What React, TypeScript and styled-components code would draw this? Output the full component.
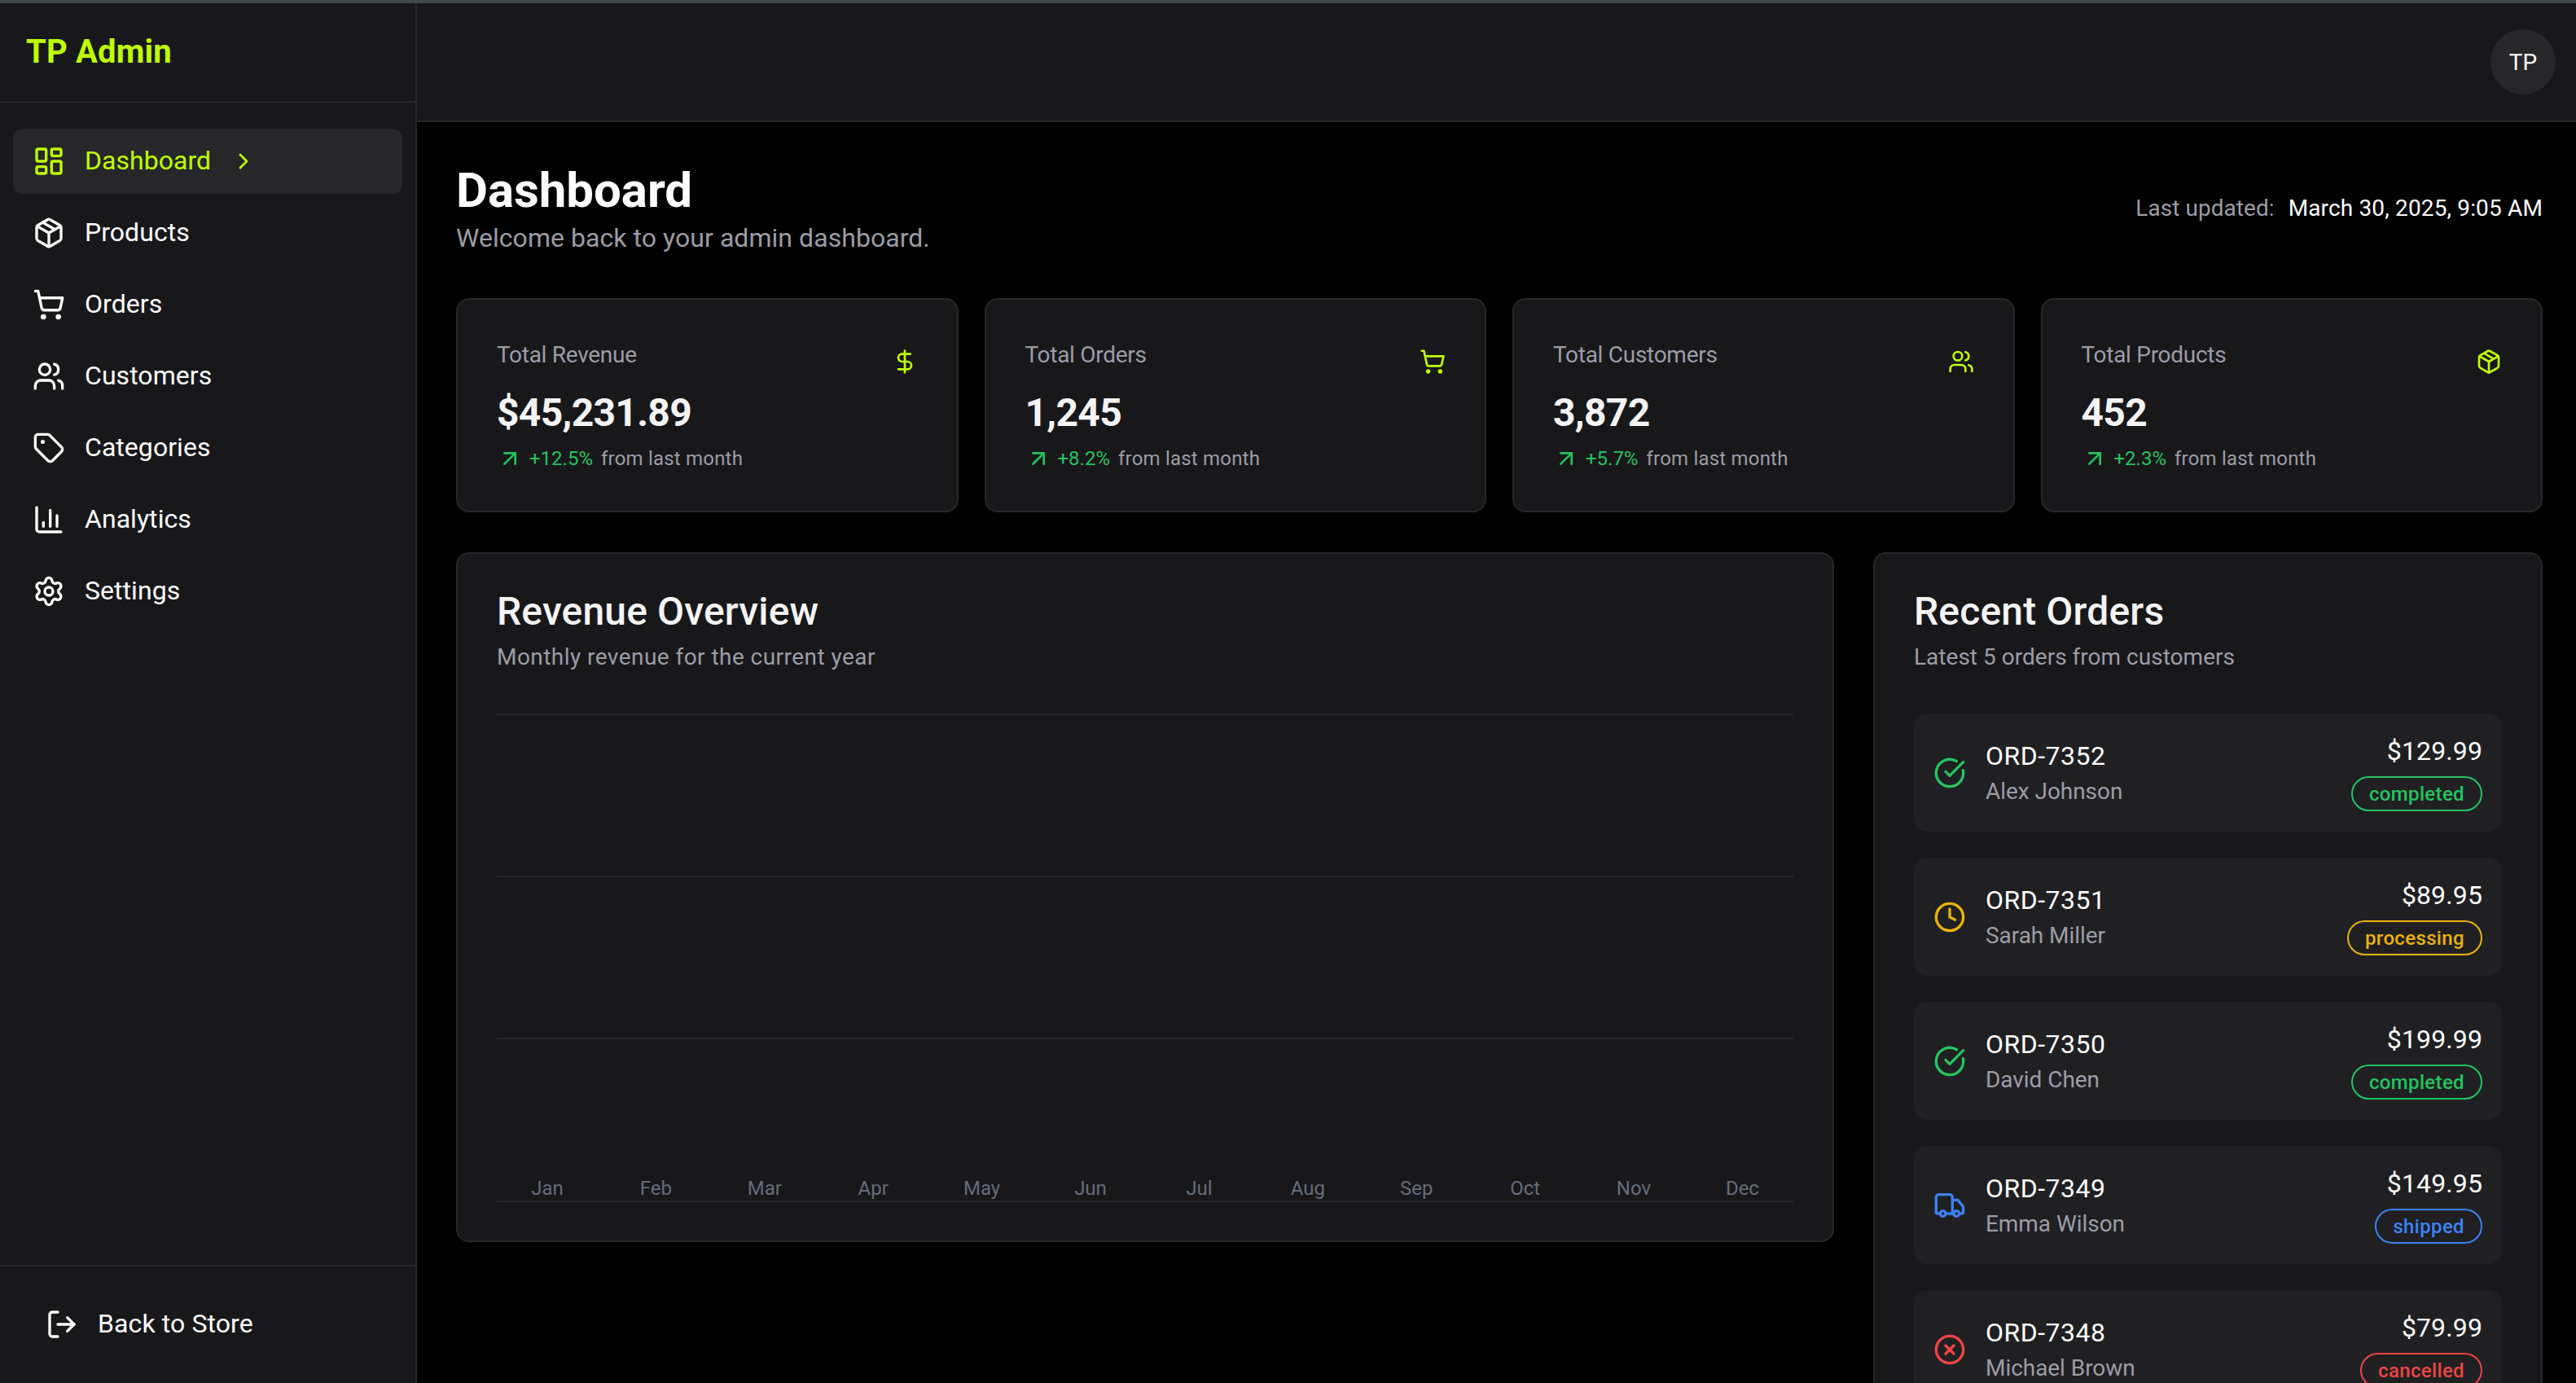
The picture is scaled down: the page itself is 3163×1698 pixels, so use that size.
import React from "react";
import styled, { createGlobalStyle } from "styled-components";
import {
  LayoutDashboard, Package, ShoppingCart, Users, Tag, ChartColumn, Settings, LogOut,
  ChevronRight, DollarSign, ArrowUpRight, CircleCheckBig, Clock, Truck, CircleX,
} from "lucide-react";

const LIME = "#bfff00";
const MUTED = "#9c9ca5";
const FONT = `Roboto, "Noto Sans", sans-serif`;

const Global = createGlobalStyle`
  * { box-sizing: border-box; }
  html, body { margin: 0; height: 100%; background: #000; overflow: hidden; }
  body { font-family: ${FONT}; color: #fff; }
`;

const Page = styled.div`
  width: 3163px; height: 1698px; display: flex; flex-direction: column; overflow: hidden; background: #000;
`;
const TopStrip = styled.div`height: 4px; flex: none; background: #3d484b;`;
const Shell = styled.div`flex: 1; display: flex; min-height: 0;`;

const Sidebar = styled.aside`
  width: 512px; flex: none; display: flex; flex-direction: column;
  background: #18181b; border-right: 2px solid #27272a;
`;
const Brand = styled.div`
  height: 122px; flex: none; display: flex; align-items: center; padding-left: 32px;
  border-bottom: 2px solid #27272a;
`;
const BrandText = styled.span`font-size: 40px; font-weight: 700; color: ${LIME}; letter-spacing: 0.15px; margin-top: -2px;`;
const Nav = styled.nav`display: flex; flex-direction: column; gap: 8px; padding: 32px 16px;`;
const NavItem = styled.a<{ $active?: boolean }>`
  height: 80px; display: flex; align-items: center; gap: 24px; padding: 0 24px; border-radius: 12px;
  font-size: 32px; letter-spacing: 0.05px;
  color: ${(p) => (p.$active ? LIME : "#fff")};
  background: ${(p) => (p.$active ? "#27272a" : "transparent")};
`;
const NavLabel = styled.span`margin-top: -3px;`;
const SideFoot = styled.div`
  margin-top: auto; height: 145px; flex: none; border-top: 2px solid #27272a;
  display: flex; align-items: center; padding-left: 56px;
`;
const BackLink = styled.a`display: flex; align-items: center; gap: 24px; font-size: 32px; letter-spacing: 0.1px; color: #fff; margin-top: -2px;`;
const BackLabel = styled.span`margin-top: -2px;`;

const Main = styled.main`flex: 1; min-width: 0; display: flex; flex-direction: column;`;
const TopBar = styled.header`
  height: 146px; flex: none; display: flex; align-items: center; justify-content: flex-end;
  padding-right: 25px; background: #18181b; border-bottom: 2px solid #27272a;
`;
const Avatar = styled.div`
  width: 80px; height: 80px; border-radius: 50%; background: #27272a;
  display: flex; align-items: center; justify-content: center; font-size: 28px; font-weight: 400;
`;
const Content = styled.div`flex: 1; padding: 48px 41px 0 48px;`;
const PageHead = styled.div`display: flex; justify-content: space-between; align-items: center; margin-bottom: 48px;`;
const Title = styled.h1`margin: 0; font-size: 60px; line-height: 72px; font-weight: 700; letter-spacing: -0.05px;`;
const Subtitle = styled.p`margin: -2px 0 2px; font-size: 32px; line-height: 48px; color: ${MUTED}; letter-spacing: 0.05px;`;
const Updated = styled.div`display: flex; gap: 17px; font-size: 28px; line-height: 40px; margin-top: -4px;`;
const UpdatedLabel = styled.span`color: ${MUTED}; letter-spacing: 0.05px;`;
const UpdatedValue = styled.span`font-weight: 400; letter-spacing: 0.15px;`;

const Stats = styled.div`display: grid; grid-template-columns: repeat(4, 1fr); gap: 32px; margin-bottom: 49px;`;
const Card = styled.section`background: #18181b; border: 2px solid #27272a; border-radius: 16px;`;
const StatCard = styled(Card)`padding: 48px;`;
const StatHead = styled.div`display: flex; justify-content: space-between; height: 44px; margin-bottom: 15px;`;
const StatLabel = styled.span`font-size: 28px; line-height: 40px; color: ${MUTED}; letter-spacing: -0.28px;`;
const StatIcon = styled.span`color: ${LIME}; display: flex; margin-top: 12px;`;
const StatValue = styled.div`font-size: 48px; line-height: 64px; font-weight: 700; color: #f4f4f5; letter-spacing: -0.7px; margin-bottom: 8px;`;
const Trend = styled.div`display: flex; align-items: center; height: 32px; font-size: 24px; color: ${MUTED}; letter-spacing: 0.2px;`;
const TrendArrow = styled(ArrowUpRight)`color: #22c55e; margin-right: 8px;`;
const TrendValue = styled.span`color: #22c55e; margin-right: 10px; letter-spacing: 0;`;

const Panels = styled.div`display: grid; grid-template-columns: 1692px 822px; gap: 48px; align-items: start;`;
const RevenuePanel = styled(Card)`padding: 47px 48px 46px;`;
const OrdersPanel = styled(Card)`padding: 47px 48px;`;
const PanelTitle = styled.h2`margin: 0 0 12px; font-size: 48px; line-height: 48px; font-weight: 500; color: #f4f4f5; letter-spacing: 0.15px;`;
const PanelSub = styled.p`margin: 0 0 49px; font-size: 28px; line-height: 40px; color: ${MUTED}; letter-spacing: 0.02px;`;
const RevenueSub = styled(PanelSub)`letter-spacing: 0.45px;`;
const ChartSvg = styled.svg`display: block; width: 1592px; height: 601px;`;
const GridLine = styled.line`stroke: #27272a; stroke-width: 2;`;
const AxisLabel = styled.text`font-family: ${FONT}; font-size: 24px; fill: #666c78; text-anchor: middle;`;

const OrderList = styled.div`display: flex; flex-direction: column; gap: 32px;`;
const OrderRow = styled.div`
  display: flex; align-items: center; justify-content: space-between; padding: 24px;
  border-radius: 16px; background: #202023;
`;
const OrderLeft = styled.div`display: flex; align-items: center; gap: 24px;`;
const OrderIcon = styled.span<{ $c: string }>`display: flex; color: ${(p) => p.$c};`;
const OrderId = styled.div`font-size: 32px; line-height: 48px; letter-spacing: 0.5px;`;
const OrderName = styled.div`font-size: 28px; line-height: 42px; margin: -1px 0 1px; color: ${MUTED}; letter-spacing: -0.05px;`;
const OrderRight = styled.div`display: flex; flex-direction: column; align-items: flex-end;`;
const Price = styled.div`font-size: 32px; line-height: 48px; margin: -2px 0 2px; letter-spacing: 0.12px;`;
const Badge = styled.span<{ $c: string }>`
  height: 43px; margin: 5px 0 1px; padding: 0 20px; display: flex; align-items: center;
  border: 2px solid ${(p) => p.$c}; border-radius: 999px; color: ${(p) => p.$c};
  font-size: 24px; font-weight: 500; letter-spacing: 0.35px;
`;

const navItems = [
  { label: "Dashboard", Icon: LayoutDashboard, active: true },
  { label: "Products", Icon: Package },
  { label: "Orders", Icon: ShoppingCart },
  { label: "Customers", Icon: Users },
  { label: "Categories", Icon: Tag },
  { label: "Analytics", Icon: ChartColumn },
  { label: "Settings", Icon: Settings },
];
const stats = [
  { label: "Total Revenue", value: "$45,231.89", trend: "+12.5%", Icon: DollarSign },
  { label: "Total Orders", value: "1,245", trend: "+8.2%", Icon: ShoppingCart },
  { label: "Total Customers", value: "3,872", trend: "+5.7%", Icon: Users },
  { label: "Total Products", value: "452", trend: "+2.3%", Icon: Package },
];
const STATUS = {
  completed: { c: "#22c55e", Icon: CircleCheckBig },
  processing: { c: "#eab308", Icon: Clock },
  shipped: { c: "#3b82f6", Icon: Truck },
  cancelled: { c: "#ef4444", Icon: CircleX },
};
const orders: { id: string; name: string; price: string; status: keyof typeof STATUS }[] = [
  { id: "ORD-7352", name: "Alex Johnson", price: "$129.99", status: "completed" },
  { id: "ORD-7351", name: "Sarah Miller", price: "$89.95", status: "processing" },
  { id: "ORD-7350", name: "David Chen", price: "$199.99", status: "completed" },
  { id: "ORD-7349", name: "Emma Wilson", price: "$149.95", status: "shipped" },
  { id: "ORD-7348", name: "Michael Brown", price: "$79.99", status: "cancelled" },
];
const months = ["Jan","Feb","Mar","Apr","May","Jun","Jul","Aug","Sep","Oct","Nov","Dec"];

export default function App() {
  return (
    <Page>
      <Global />
      <TopStrip />
      <Shell>
        <Sidebar>
          <Brand><BrandText>TP Admin</BrandText></Brand>
          <Nav>
            {navItems.map(({ label, Icon, active }) => (
              <NavItem key={label} $active={active}>
                <Icon size={40} />
                <NavLabel>{label}</NavLabel>
                {active && <ChevronRight size={32} />}
              </NavItem>
            ))}
          </Nav>
          <SideFoot>
            <BackLink><LogOut size={40} /><BackLabel>Back to Store</BackLabel></BackLink>
          </SideFoot>
        </Sidebar>
        <Main>
          <TopBar><Avatar>TP</Avatar></TopBar>
          <Content>
            <PageHead>
              <div>
                <Title>Dashboard</Title>
                <Subtitle>Welcome back to your admin dashboard.</Subtitle>
              </div>
              <Updated>
                <UpdatedLabel>Last updated:</UpdatedLabel>
                <UpdatedValue>March 30, 2025, 9:05 AM</UpdatedValue>
              </Updated>
            </PageHead>
            <Stats>
              {stats.map(({ label, value, trend, Icon }) => (
                <StatCard key={label}>
                  <StatHead>
                    <StatLabel>{label}</StatLabel>
                    <StatIcon><Icon size={32} /></StatIcon>
                  </StatHead>
                  <StatValue>{value}</StatValue>
                  <Trend>
                    <TrendArrow size={32} />
                    <TrendValue>{trend}</TrendValue>
                    from last month
                  </Trend>
                </StatCard>
              ))}
            </Stats>
            <Panels>
              <RevenuePanel>
                <PanelTitle>Revenue Overview</PanelTitle>
                <RevenueSub>Monthly revenue for the current year</RevenueSub>
                <ChartSvg viewBox="0 0 1592 601">
                  {[1, 200, 399, 599].map((y) => <GridLine key={y} x1={0} x2={1592} y1={y} y2={y} />)}
                  {months.map((m, i) => <AxisLabel key={m} x={62 + i * 133.4} y={591}>{m}</AxisLabel>)}
                </ChartSvg>
              </RevenuePanel>
              <OrdersPanel>
                <PanelTitle>Recent Orders</PanelTitle>
                <PanelSub>Latest 5 orders from customers</PanelSub>
                <OrderList>
                  {orders.map((o) => {
                    const { c, Icon } = STATUS[o.status];
                    return (
                      <OrderRow key={o.id}>
                        <OrderLeft>
                          <OrderIcon $c={c}><Icon size={40} /></OrderIcon>
                          <div>
                            <OrderId>{o.id}</OrderId>
                            <OrderName>{o.name}</OrderName>
                          </div>
                        </OrderLeft>
                        <OrderRight>
                          <Price>{o.price}</Price>
                          <Badge $c={c}>{o.status}</Badge>
                        </OrderRight>
                      </OrderRow>
                    );
                  })}
                </OrderList>
              </OrdersPanel>
            </Panels>
          </Content>
        </Main>
      </Shell>
    </Page>
  );
}
